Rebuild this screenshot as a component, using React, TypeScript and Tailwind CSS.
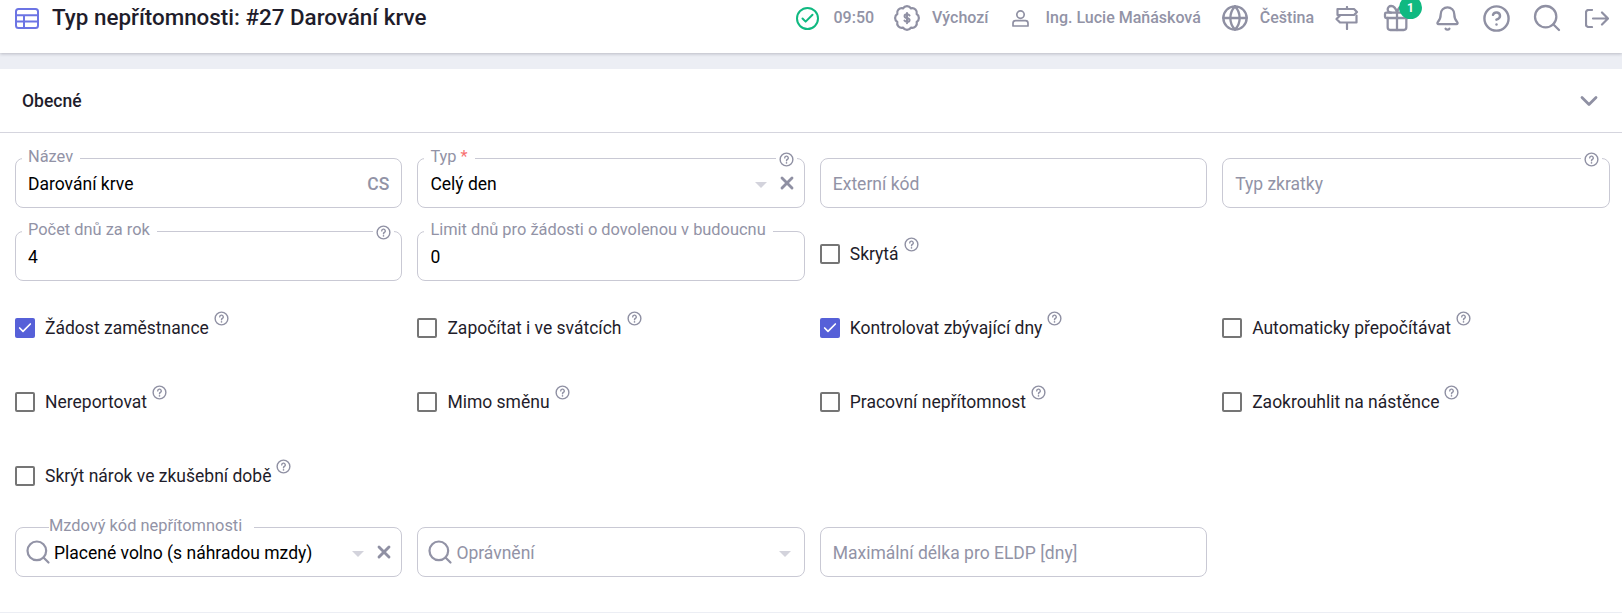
import React from "react";
import { Bell, ChevronDown, CircleHelp, Globe, Search, Gift, X, Check } from "lucide-react";

const HelpDot: React.FC<{ className?: string }> = ({ className }) => (
  <svg viewBox="0 0 16 16" className={className} fill="none" stroke="#8f90a3" strokeWidth="1.5" strokeLinecap="round">
    <circle cx="8" cy="8" r="6.8" />
    <path d="M6.1 6.3a1.9 1.9 0 1 1 2.8 1.7c-.6.3-.9.7-.9 1.3" />
    <path d="M8 11.6v.1" strokeWidth="1.7" />
  </svg>
);

const Caret = () => <span className="h-0 w-0 border-x-[6px] border-t-[6px] border-x-transparent border-t-[#d3d3dc]" />;

const Field: React.FC<{
  label?: React.ReactNode;
  labelClass?: string;
  value?: string;
  placeholder?: string;
  help?: boolean;
  search?: boolean;
  caret?: boolean;
  clear?: boolean;
  suffix?: string;
}> = ({ label, labelClass, value, placeholder, help, search, caret, clear, suffix }) => (
  <div className="relative flex h-[50px] items-center rounded-lg border border-[#c9c9d4] bg-white pl-3 pr-3">
    {label && (
      <span className={`absolute -top-[12px] bg-white text-[16.4px] leading-5 text-[#9293a6] ${labelClass ?? "left-[6px] pl-[6px] pr-[7px]"}`}>
        {label}
      </span>
    )}
    {help && (
      <span className="absolute -top-[7px] right-[7px] bg-white px-[3px]">
        <HelpDot className="h-[15px] w-[15px]" />
      </span>
    )}
    {search && <Search size={28} strokeWidth={1.9} className="-ml-[4px] mr-[2px] shrink-0 text-[#9293a6]" />}
    {value ? (
      <span className="mt-[2px] grow text-[17.5px] text-black">{value}</span>
    ) : (
      <span className="mt-[2px] grow text-[17.5px] text-[#9293a6]">{placeholder}</span>
    )}
    {caret && <span className={`mt-1 flex ${clear ? "mr-[10px]" : "mr-[1px]"}`}><Caret /></span>}
    {clear && <X size={20} strokeWidth={3.4} className="-mr-[5px] text-[#8f90a3]" />}
    {suffix && <span className="mt-[2px] text-[17.5px] font-medium text-[#9293a6]">{suffix}</span>}
  </div>
);

const CheckRow: React.FC<{ label: string; checked?: boolean; className?: string }> = ({ label, checked, className }) => (
  <div className={`flex items-start ${className ?? ""}`}>
    {checked ? (
      <span className="mt-[13px] flex h-5 w-5 items-center justify-center rounded-[2px] bg-[#5660d8]">
        <Check size={16} strokeWidth={2.5} className="text-white" />
      </span>
    ) : (
      <span className="mt-[13px] h-5 w-5 rounded-[2px] border-2 border-[#757575] bg-white" />
    )}
    <span className="ml-[10px] mt-[12px] text-[17.5px] leading-[22px] text-[#1f1d2b]">{label}</span>
    <HelpDot className="ml-[5px] mt-[6px] h-[15px] w-[15px]" />
  </div>
);

const App: React.FC = () => {
  return (
    <div className="h-[613px] overflow-hidden bg-[#eceef4] font-['Roboto',sans-serif]">
      <header className="relative z-10 flex h-[53px] items-start justify-between bg-white pl-[15px] pr-[13px] pt-[6px] shadow-[0_1px_3px_rgba(40,40,60,0.25)]">
        <div className="flex h-6 items-center">
          <svg viewBox="0 0 24 21" className="h-[21px] w-6" fill="none" stroke="#6c74e4" strokeWidth="2">
            <rect x="1" y="1" width="22" height="19" rx="2.5" />
            <path d="M1 7.3h22M1 13.6h22M9 7.3V20" />
          </svg>
          <h1 className="ml-[13px] text-[22.4px] font-medium text-[#1f1d2b]">Typ nepřítomnosti: #27 Darování krve</h1>
        </div>
        <div className="flex h-6 items-center text-base font-medium text-[#9293a6]">
          <span className="flex h-[23px] w-[23px] items-center justify-center rounded-full border-[2.5px] border-[#10b981]">
            <Check size={15} strokeWidth={3.2} className="text-[#10b981]" />
          </span>
          <span className="ml-[14px]">09:50</span>
          <svg viewBox="0 0 24 24" className="ml-[19px] h-7 w-7" fill="none" stroke="#8f90a3" strokeWidth="1.9" strokeLinecap="round" strokeLinejoin="round">
            <path d="M8.6 3.7A4 4 0 0 1 15.4 3.7A4 4 0 0 1 20.3 8.6A4 4 0 0 1 20.3 15.4A4 4 0 0 1 15.4 20.3A4 4 0 0 1 8.6 20.3A4 4 0 0 1 3.7 15.4A4 4 0 0 1 3.7 8.6A4 4 0 0 1 8.6 3.7Z" />
            <path d="M14.2 9.8c-.4-.7-1.1-1-2.2-1-1.2 0-2.1.6-2.1 1.6 0 2.2 4.3 1.1 4.3 3.3 0 1-.9 1.6-2.2 1.6-1 0-1.8-.4-2.2-1.1M12 7.6v8.8" strokeWidth="1.7" />
          </svg>
          <span className="ml-[11px]">Výchozí</span>
          <svg viewBox="0 0 17 17" className="ml-[24px] h-[17px] w-[17px]" fill="none" stroke="#8f90a3" strokeWidth="1.7">
            <circle cx="8.5" cy="4.6" r="3.7" />
            <path d="M1 13.3c0-1.5 1.2-2.6 2.6-2.6h9.8c1.4 0 2.6 1.1 2.6 2.600V16H1z" strokeLinejoin="round" />
          </svg>
          <span className="ml-4">Ing. Lucie Maňásková</span>
          <Globe size={28} strokeWidth={2} className="ml-[20px] text-[#8f90a3]" />
          <span className="ml-[11px]">Čeština</span>
          <svg viewBox="0 0 24 24" className="ml-[21px] h-6 w-6" fill="none" stroke="#8f90a3" strokeWidth="2.2" strokeLinecap="round" strokeLinejoin="round">
            <path d="M12 1v2M12 17v6" />
            <path d="M2.500 3h16.500l3 3-3 3H2.500z" />
            <path d="M21.500 9.500v7H5l-3.500-3.500 3.500-3.500" />
          </svg>
          <span className="relative ml-[22px] flex">
            <Gift size={32} strokeWidth={1.7} className="text-[#8f90a3]" />
            <span className="absolute -right-[9px] -top-[6px] flex h-[23px] w-[23px] items-center justify-center rounded-full bg-[#10b981] text-xs font-bold text-white">1</span>
          </span>
          <Bell size={27} strokeWidth={2} className="ml-[21px] text-[#8f90a3]" />
          <CircleHelp size={29} strokeWidth={2} className="ml-[21px] text-[#8f90a3]" />
          <Search size={32} strokeWidth={1.7} className="ml-5 text-[#8f90a3]" />
          <svg viewBox="0 0 24 19" className="ml-[22px] h-[19px] w-6" fill="none" stroke="#8f90a3" strokeWidth="2.2" strokeLinecap="round" strokeLinejoin="round">
            <path d="M7 1H3.500A2.500 2.500 0 0 0 1 3.500v12A2.500 2.500 0 0 0 3.500 18H7" />
            <path d="M8 9.500h15M17 3.500l6 6-6 6" />
          </svg>
        </div>
      </header>

      <main className="mt-4 h-[543px] bg-white">
        <div className="flex h-[64px] items-center justify-between border-b border-[#d5d5de] pl-[22px] pr-[19px]">
          <h2 className="mt-[2px] text-[17.5px] font-medium text-[#1f1d2b]">Obecné</h2>
          <ChevronDown size={28} strokeWidth={2.4} className="text-[#8f90a3]" />
        </div>
        <div className="grid grid-cols-4 gap-x-[15px] pl-[15px] pr-[12.5px] pt-[25px]">
          <div className="h-[73px]">
            <Field label="Název" value="Darování krve" suffix="CS" />
          </div>
          <div>
            <Field label={<>Typ <span className="text-[#f87171]">*</span></>} value="Celý den" help caret clear />
          </div>
          <div>
            <Field placeholder="Externí kód" />
          </div>
          <div>
            <Field placeholder="Typ zkratky" help />
          </div>

          <div className="h-[74px]">
            <Field label="Počet dnů za rok" value="4" help />
          </div>
          <div>
            <Field label="Limit dnů pro žádosti o dovolenou v budoucnu" value="0" />
          </div>
          <CheckRow label="Skrytá" />
          <div />

          <CheckRow className="h-[74px]" label="Žádost zaměstnance" checked />
          <CheckRow label="Započítat i ve svátcích" />
          <CheckRow label="Kontrolovat zbývající dny" checked />
          <CheckRow label="Automaticky přepočítávat" />

          <CheckRow className="h-[74px]" label="Nereportovat" />
          <CheckRow label="Mimo směnu" />
          <CheckRow label="Pracovní nepřítomnost" />
          <CheckRow label="Zaokrouhlit na nástěnce" />

          <CheckRow className="col-span-4 h-[74px]" label="Skrýt nárok ve zkušební době" />

          <Field label="Mzdový kód nepřítomnosti" labelClass="left-[33px] pr-3" value="Placené volno (s náhradou mzdy)" search caret clear />
          <Field placeholder="Oprávnění" search caret />
          <Field placeholder="Maximální délka pro ELDP [dny]" />
        </div>
      </main>
    </div>
  );
};

export default App;
